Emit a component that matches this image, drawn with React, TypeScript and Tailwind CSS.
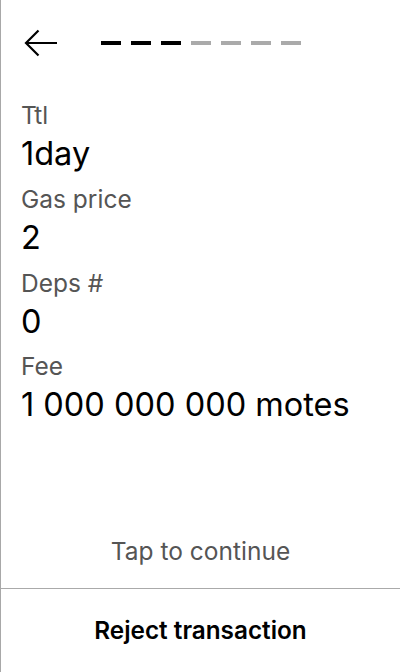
import React from "react";

const rows = [
  { label: "Ttl", value: "1day" },
  { label: "Gas price", value: "2" },
  { label: "Deps #", value: "0" },
  { label: "Fee", value: "1 000 000 000 motes" },
];

export default function App() {
  return (
    <div
      className="h-[672px] w-[400px] flex flex-col bg-white border-l border-[#a8a8a8] text-black"
      style={{ fontFamily: "Inter, 'Noto Sans', sans-serif" }}
    >
      <div className="flex items-center h-[86px] pl-[23px]">
        <svg width="34" height="28" viewBox="0 0 34 28" className="shrink-0">
          <path d="M2 14 H33 M14.5 1.5 L2 14 L14.5 26.5" fill="none" stroke="#000" strokeWidth="2.2" />
        </svg>
        <div className="flex gap-[10px] ml-[43px]">
          {[0, 1, 2, 3, 4, 5, 6].map((i) => (
            <div key={i} className={i < 3 ? "w-[20px] h-[4px] bg-black" : "w-[20px] h-[4px] bg-[#aaaaaa]"} />
          ))}
        </div>
      </div>
      <div className="flex flex-col px-[20px] pt-[11px]">
        {rows.map((r) => (
          <div key={r.label} className="flex flex-col">
            <div className="text-[24.5px] leading-[36px] text-[#555555]">{r.label}</div>
            <div className="text-[32.5px] leading-[48px] -mt-[3px] mb-[2.8px]">{r.value}</div>
          </div>
        ))}
      </div>
      <div className="flex-1" />
      <div className="text-center text-[24.5px] leading-[30px] text-[#555555] pb-[22px]">Tap to continue</div>
      <div className="border-t border-[#aaaaaa] h-[84px] flex items-center justify-center">
        <span className="text-[24.3px] font-semibold">Reject transaction</span>
      </div>
    </div>
  );
}
